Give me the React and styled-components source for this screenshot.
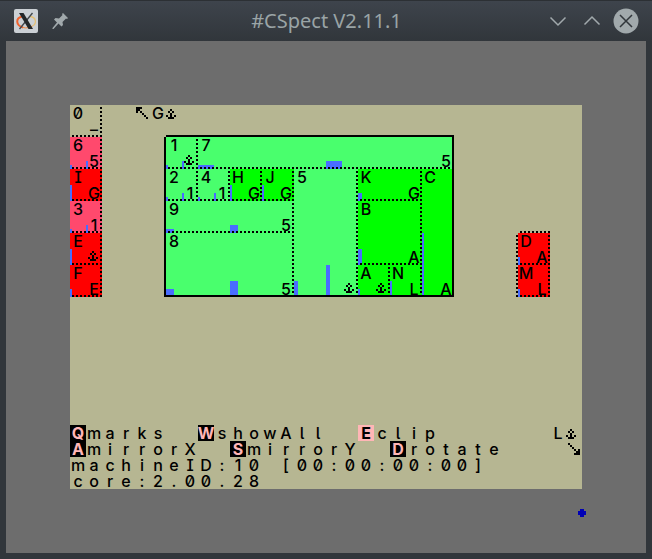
import React from 'react';
import styled, { createGlobalStyle } from 'styled-components';

const C = {
  sand: '#b6b692',
  lime: '#49ff6d',
  green: '#00ff00',
  red: '#ff0000',
  pink: '#ff496d',
  pale: '#ffb6b6',
  blue: '#496dff',
};

const GlobalStyle = createGlobalStyle`
  * { box-sizing: border-box; }
  body { margin: 0; background: #31363b; }
`;

const Window = styled.div`
  display: flex;
  flex-direction: column;
  min-height: 100vh;
  background: #31363b;
`;

const TitleBar = styled.header`
  display: grid;
  grid-template-columns: 1fr auto 1fr;
  align-items: center;
  height: 41px;
  padding: 0 13px 0 14px;
  border-top: 1px solid #2c3034;
  background: linear-gradient(#3e444c, #31363b);
`;

const TitleIcons = styled.div`
  display: flex;
  align-items: center;
  gap: 14px;
`;

const Title = styled.h1`
  margin: 0;
  color: #9aa4a6;
  font: 400 20px/28px 'Noto Sans', sans-serif;
`;

const WindowControls = styled.div`
  display: flex;
  align-items: center;
  justify-content: flex-end;
  gap: 8px;
`;

const IconButton = styled.button`
  display: flex;
  padding: 0;
  border: 0;
  background: none;
  color: #a1a9ac;
`;

const Viewport = styled.main`
  position: relative;
  flex: 1;
  margin: 0 6px 6px;
  padding: 64px;
  background: #6d6d6d;
`;

const Screen = styled.div`
  display: grid;
  grid-template-columns: repeat(32, minmax(16px, 1fr));
  grid-template-rows: repeat(24, 16px);
  background: ${C.sand};
  color: #000;
  font: 500 16px/16px Inter, 'DejaVu Sans', sans-serif;
  font-feature-settings: 'zero', 'cv05', 'cv08';
`;

const area = ({ $at }) => `
  grid-column: ${$at[0] + 1} / span ${$at[2]};
  grid-row: ${$at[1] + 1} / span ${$at[3]};
`;

const Line = styled.div`
  ${area}
  display: flex;
  white-space: pre;
`;

const Cell = styled.span`
  display: flex;
  flex: none;
  justify-content: center;
  width: 16px;
  height: 16px;
`;

const Key = styled(Cell)`
  background: ${(p) => (p.$on ? C.pale : '#000')};
  color: ${(p) => (p.$on ? '#000' : C.pale)};
  font-weight: 700;
`;

const Command = styled.button`
  ${area}
  display: flex;
  padding: 0;
  border: 0;
  background: none;
  color: inherit;
  font: inherit;
  font-feature-settings: inherit;
`;

const Board = styled.section`
  ${area}
  position: relative;
  display: grid;
  grid-template-columns: repeat(18, 1fr);
  grid-template-rows: repeat(10, 16px);
  box-shadow: -2px 0 #000, 0 -2px #000;
  &::after {
    content: '';
    position: absolute;
    inset: 0;
    border: solid #000;
    border-width: 0 2px 2px 0;
    pointer-events: none;
  }
`;

const dotsX = 'repeating-linear-gradient(90deg, transparent 0 2px, #000 2px 4px)';
const dotsY = 'repeating-linear-gradient(180deg, transparent 0 2px, #000 2px 4px)';

const Tile = styled.div`
  ${area}
  position: relative;
  display: flex;
  flex-direction: column;
  justify-content: space-between;
  background: ${(p) => p.$fill};
  &::after {
    content: '';
    position: absolute;
    inset: 0;
    background: ${dotsX} left bottom / 100% 2px no-repeat,
      ${dotsY} right top / 2px 100% no-repeat;
  }
`;

const Corner = styled(Cell)`
  position: relative;
  z-index: 1;
  align-self: ${(p) => (p.$end ? 'flex-end' : 'flex-start')};
`;

const Bar = styled.i`
  position: absolute;
  bottom: 0;
  left: ${(p) => p.$bar[0]}px;
  width: ${(p) => p.$bar[1]}px;
  height: ${(p) => p.$bar[2]}px;
  background: ${C.blue};
`;

const Group = styled.section`
  ${area}
  position: relative;
  display: grid;
  grid-template-columns: repeat(2, 1fr);
  grid-auto-rows: 16px;
  &::before {
    content: '';
    position: absolute;
    inset: -2px 0 0 -2px;
    display: ${(p) => (p.$framed ? 'block' : 'none')};
    background: ${dotsX} 2px top / 100% 2px no-repeat,
      ${dotsY} left 2px / 2px 100% no-repeat;
  }
`;

const Sprite = styled.svg`
  position: absolute;
  right: 60px;
  bottom: 36px;
`;

const glyphs = {
  anchor: ['', '...#', '..#.#', '...#', '.#.#.#', '..###'],
  smallAnchor: ['', '', '..#', '.#.#', '..#', '#.#.#', '.###'],
  nw: ['', '.###', '.##', '.#.#', '....#', '.....#', '......#'],
  se: ['', '.#', '..#', '...#', '....#.#', '.....##', '....###'],
};

function PixelGlyph({ name }) {
  return (
    <svg width="16" height="16" viewBox="0 0 8 8" shapeRendering="crispEdges" aria-label={name}>
      {glyphs[name].flatMap((row, y) =>
        [...row].map((c, x) => c === '#' && <rect key={`${x}-${y}`} x={x} y={y} width="1" height="1" />)
      )}
    </svg>
  );
}

const symbol = (c) => (c in glyphs ? <PixelGlyph name={c} /> : c);

function Chars({ text }) {
  return [...text].map((c, i) => <Cell key={i}>{c}</Cell>);
}

function MapTile({ tile: [at, fill, first, last, bars = []] }) {
  return (
    <Tile $at={at} $fill={fill}>
      {bars.map((b, i) => <Bar key={i} $bar={b} />)}
      <Corner>{first}</Corner>
      <Corner $end>{symbol(last)}</Corner>
    </Tile>
  );
}

const leftTiles = [
  [[0, 0, 2, 2], C.sand, '0', '–'],
  [[0, 2, 2, 2], C.pink, '6', '5', [[0, 2, 4], [16, 2, 8]]],
  [[0, 4, 2, 2], C.red, 'I', 'G', [[0, 2, 16]]],
  [[0, 6, 2, 2], C.pink, '3', '1', [[0, 2, 4], [16, 2, 8]]],
  [[0, 8, 2, 2], C.red, 'E', 'anchor', [[0, 2, 16]]],
  [[0, 10, 2, 2], C.red, 'F', 'E', [[0, 2, 8]]],
];

const rightTiles = [
  [[0, 0, 2, 2], C.red, 'D', 'A', [[0, 2, 8]]],
  [[0, 2, 2, 2], C.red, 'M', 'L', [[0, 2, 8]]],
];

const boardTiles = [
  [[0, 0, 2, 2], C.lime, '1', 'anchor', [[0, 2, 4], [16, 2, 8]]],
  [[2, 0, 16, 2], C.lime, '7', '5', [[0, 16, 4], [128, 16, 8]]],
  [[0, 2, 2, 2], C.lime, '2', '1', [[0, 2, 4], [16, 2, 8]]],
  [[2, 2, 2, 2], C.lime, '4', '1', [[0, 2, 4], [16, 2, 8]]],
  [[4, 2, 2, 2], C.green, 'H', 'G', [[0, 2, 16]]],
  [[6, 2, 2, 2], C.green, 'J', 'G', [[0, 2, 16]]],
  [[8, 2, 4, 8], C.lime, '5', 'anchor', [[0, 4, 16], [32, 4, 32]]],
  [[12, 2, 4, 2], C.green, 'K', 'G', [[0, 4, 8]]],
  [[16, 2, 2, 8], C.green, 'C', 'A', [[0, 2, 64]]],
  [[0, 4, 8, 2], C.lime, '9', '5', [[0, 8, 4], [64, 8, 8]]],
  [[12, 4, 4, 4], C.green, 'B', 'A', [[0, 4, 16]]],
  [[0, 6, 8, 4], C.lime, '8', '5', [[0, 8, 8], [64, 8, 16]]],
  [[12, 8, 2, 2], C.green, 'A', 'anchor', [[0, 2, 8]]],
  [[14, 8, 2, 2], C.green, 'N', 'L', [[0, 2, 16]]],
];

const commands = [
  { at: [0, 20, 6, 1], key: 'Q', label: 'marks' },
  { at: [8, 20, 8, 1], key: 'W', label: 'showAll' },
  { at: [18, 20, 5, 1], key: 'E', label: 'clip', on: true },
  { at: [0, 21, 8, 1], key: 'A', label: 'mirrorX' },
  { at: [10, 21, 8, 1], key: 'S', label: 'mirrorY' },
  { at: [20, 21, 7, 1], key: 'D', label: 'rotate' },
];

function AppIcon() {
  return (
    <svg width="24" height="24" viewBox="0 0 24 24" aria-hidden="true">
      <rect width="24" height="24" rx="2" fill="#cbd0d5" />
      <path d="M8 7.500C1.500 9 1.500 16.500 9 18.500" fill="none" stroke="#f0622d" strokeWidth="2" />
      <path d="M9 18.500C12 19.500 16 18.500 18.500 17" fill="none" stroke="#f08b42" strokeWidth="1" />
      <path d="M16 7.500C23 8.500 22.500 15 18.500 17" fill="none" stroke="#e3bf76" strokeWidth="1.300" />
      <path d="M18.500 4L5.500 20" stroke="#42484d" strokeWidth="1.400" />
      <path d="M5 4h4.500l9.500 16h-4.500z" fill="#23272a" />
    </svg>
  );
}

function PinIcon() {
  return (
    <svg width="16" height="16" viewBox="0 0 16 16" fill="#a1a9ac" aria-hidden="true">
      <path d="M11 0l5 5-1 1-1-.5-3.500 3.500.5 3-1.500 1.500-3-3L1.500 16H.5v-1L5 9.500l-3-3L3.500 5l3.500.5L10.500 2 10 1z" />
    </svg>
  );
}

export default function App() {
  return (
    <Window>
      <GlobalStyle />
      <TitleBar>
        <TitleIcons>
          <AppIcon />
          <IconButton aria-label="Keep on all desktops"><PinIcon /></IconButton>
        </TitleIcons>
        <Title>#CSpect V2.11.1</Title>
        <WindowControls>
          <IconButton aria-label="Minimize">
            <svg width="26" height="26" viewBox="0 0 26 26" fill="none" stroke="currentColor" strokeWidth="1.500"><path d="M5.500 9.500l7.500 7.500 7.500-7.500" /></svg>
          </IconButton>
          <IconButton aria-label="Maximize">
            <svg width="26" height="26" viewBox="0 0 26 26" fill="none" stroke="currentColor" strokeWidth="1.500"><path d="M5.500 16.500L13 9l7.500 7.500" /></svg>
          </IconButton>
          <IconButton aria-label="Close">
            <svg width="26" height="26" viewBox="0 0 26 26"><circle cx="13" cy="13" r="12.500" fill="#a1a9ac" /><path d="M7 7l12 12M19 7L7 19" stroke="#31363b" strokeWidth="1.500" /></svg>
          </IconButton>
        </WindowControls>
      </TitleBar>
      <Viewport>
        <Screen>
          <Group $at={[0, 0, 2, 12]}>
            {leftTiles.map((t) => <MapTile key={t[2]} tile={t} />)}
          </Group>
          <Line $at={[4, 0, 3, 1]}>
            <Cell>{symbol('nw')}</Cell><Cell>G</Cell><Cell>{symbol('smallAnchor')}</Cell>
          </Line>
          <Board $at={[6, 2, 18, 10]}>
            {boardTiles.map((t) => <MapTile key={t[2]} tile={t} />)}
          </Board>
          <Group $at={[28, 8, 2, 4]} $framed>
            {rightTiles.map((t) => <MapTile key={t[2]} tile={t} />)}
          </Group>
          {commands.map((c) => (
            <Command key={c.key} $at={c.at} aria-pressed={!!c.on}>
              <Key $on={c.on}>{c.key}</Key><Chars text={c.label} />
            </Command>
          ))}
          <Line $at={[30, 20, 2, 1]}><Cell>L</Cell><Cell>{symbol('smallAnchor')}</Cell></Line>
          <Line $at={[31, 21, 1, 1]}><Cell>{symbol('se')}</Cell></Line>
          <Line $at={[0, 22, 32, 1]}><Chars text="machineID:10 [00:00:00:00]" /></Line>
          <Line $at={[0, 23, 32, 1]}><Chars text="core:2.00.28" /></Line>
        </Screen>
        <Sprite width="8" height="8" viewBox="0 0 8 8" shapeRendering="crispEdges" fill="#0000b6" aria-hidden="true">
          <path d="M2 0h4v2h2v4H6v2H2V6H0V2h2z" />
        </Sprite>
      </Viewport>
    </Window>
  );
}
